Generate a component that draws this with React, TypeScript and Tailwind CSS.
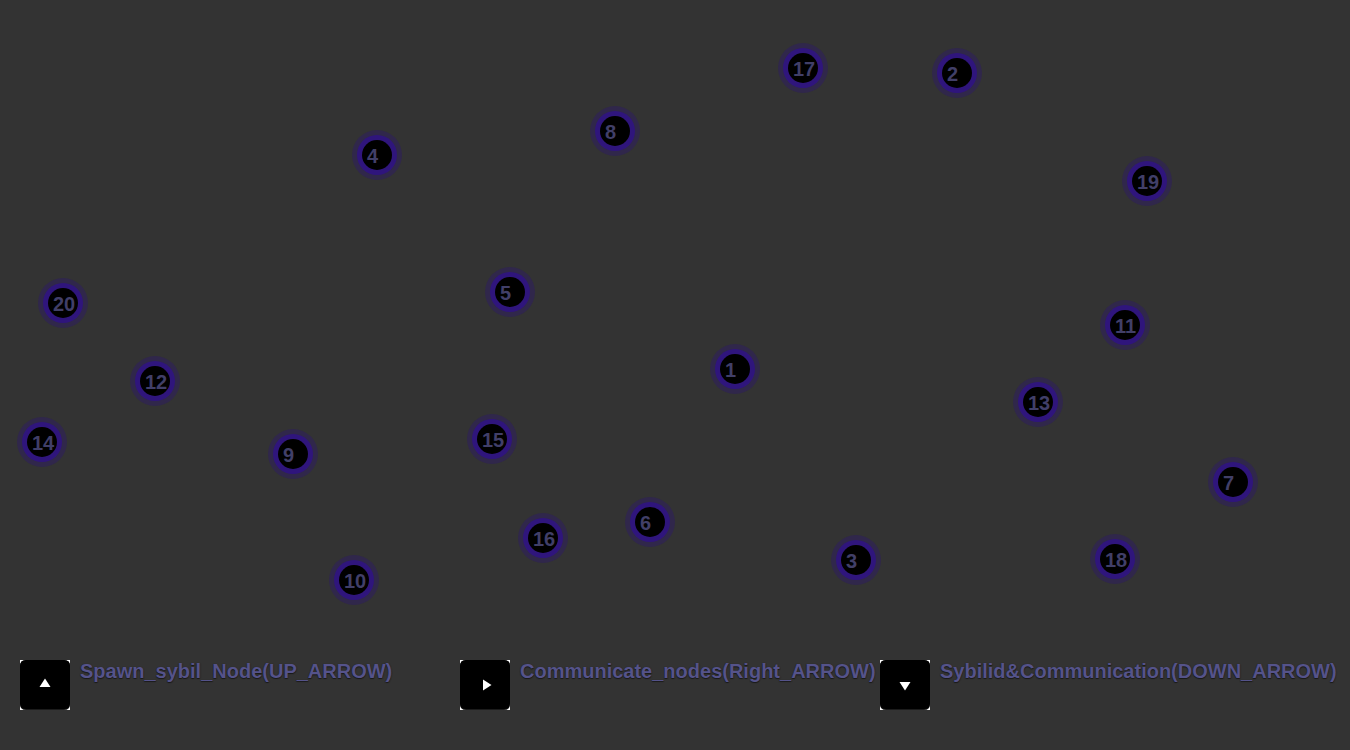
type NetworkNode = { id: number; x: number; y: number };

const nodes: NetworkNode[] = [
  { id: 1, x: 735, y: 369 },
  { id: 2, x: 957, y: 73 },
  { id: 3, x: 856, y: 560 },
  { id: 4, x: 377, y: 155 },
  { id: 5, x: 510, y: 292 },
  { id: 6, x: 650, y: 522 },
  { id: 7, x: 1233, y: 482 },
  { id: 8, x: 615, y: 131 },
  { id: 9, x: 293, y: 454 },
  { id: 10, x: 354, y: 580 },
  { id: 11, x: 1125, y: 325 },
  { id: 12, x: 155, y: 381 },
  { id: 13, x: 1038, y: 402 },
  { id: 14, x: 42, y: 442 },
  { id: 15, x: 492, y: 439 },
  { id: 16, x: 543, y: 538 },
  { id: 17, x: 803, y: 68 },
  { id: 18, x: 1115, y: 559 },
  { id: 19, x: 1147, y: 181 },
  { id: 20, x: 63, y: 303 },
];

const controls = [
  { label: "Spawn_sybil_Node(UP_ARROW)", arrow: "19.5,27 30.5,27 25,18.5" },
  { label: "Communicate_nodes(Right_ARROW)", arrow: "23,19.5 23,30.5 31.5,25" },
  { label: "Sybilid&Communication(DOWN_ARROW)", arrow: "19.5,22 30.5,22 25,30.5" },
];

function NodeMarker({ id, x, y }: NetworkNode) {
  return (
    <div
      className="absolute flex size-[50px] -translate-x-1/2 -translate-y-1/2 items-center justify-center rounded-full bg-[#30274b]"
      style={{ left: x, top: y }}
    >
      <div className="flex size-10 items-center justify-center rounded-full bg-[#2f157c]">
        <div className="flex size-[30px] items-center rounded-full bg-black pt-[2px] pl-[5px]">
          <span className="text-[20px] leading-[22px] font-bold text-[#413f68]">{id}</span>
        </div>
      </div>
    </div>
  );
}

function KeyIcon({ arrow }: { arrow: string }) {
  return (
    <svg viewBox="0 0 50 50" className="size-[50px] shrink-0" aria-hidden="true">
      <rect width="50" height="50" fill="#fff" />
      <path d="M6 0H44Q50 0 50 6V44Q50 50 44 50H6Q0 50 0 44V6Q0 0 6 0Z" fill="#1c1c1c" />
      <path d="M6 0H44Q50 0 50 6V43Q50 49 44 49H6Q0 49 0 43V6Q0 0 6 0Z" fill="#000" />
      <polygon points={arrow} fill="#fff" />
    </svg>
  );
}

export default function App() {
  return (
    <div className="flex min-h-screen flex-col overflow-hidden bg-[#333333] font-['Liberation_Sans',Arial,sans-serif]">
      <main className="relative flex-1">
        {nodes.map((node) => (
          <NodeMarker key={node.id} {...node} />
        ))}
      </main>
      <footer className="grid grid-cols-[minmax(0,440fr)_minmax(0,420fr)_minmax(0,470fr)] pb-10 pl-5">
        {controls.map(({ label, arrow }) => (
          <button key={label} type="button" className="flex items-start gap-[10px] text-left">
            <KeyIcon arrow={arrow} />
            <span className="text-[20px] leading-[22px] font-bold whitespace-nowrap text-[#55538a] [text-shadow:0px_1px_1px_#181818,0px_0px_1px_#222222]">
              {label}
            </span>
          </button>
        ))}
      </footer>
    </div>
  );
}
